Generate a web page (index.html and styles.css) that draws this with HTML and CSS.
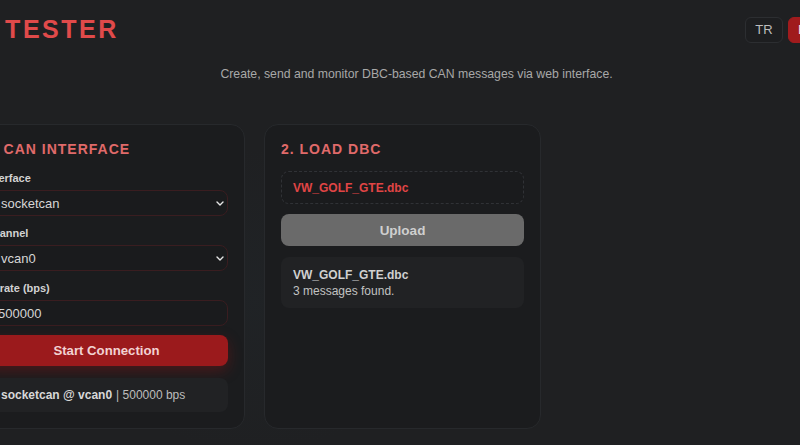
FILE: index.html
```html
<!DOCTYPE html>
<html lang="en">
<head>
<meta charset="utf-8">
<title>CAN Tester</title>
<link rel="stylesheet" href="styles.css">
</head>
<body>
<div class="viewport">
  <div class="page">
    <header class="topbar">
      <h1 class="brand">CAN TESTER</h1>
      <div class="langs">
        <button class="lang">TR</button>
        <button class="lang lang-active">EN</button>
      </div>
    </header>
    <p class="subtitle">Create, send and monitor DBC-based CAN messages via web interface.</p>
    <main class="cards">
      <section class="card">
        <h2 class="card-title">1. CAN INTERFACE</h2>
        <div class="field">
          <label class="label">Interface</label>
          <div class="control">
            <span>socketcan</span>
            <svg class="chev" width="8" height="5" viewBox="0 0 8 5"><path d="M1 1l3 3 3-3" fill="none" stroke="#e6e6e6" stroke-width="1.4" stroke-linecap="round" stroke-linejoin="round"/></svg>
          </div>
        </div>
        <div class="field">
          <label class="label">Channel</label>
          <div class="control">
            <span>vcan0</span>
            <svg class="chev" width="8" height="5" viewBox="0 0 8 5"><path d="M1 1l3 3 3-3" fill="none" stroke="#e6e6e6" stroke-width="1.4" stroke-linecap="round" stroke-linejoin="round"/></svg>
          </div>
        </div>
        <div class="field">
          <label class="label">Bitrate (bps)</label>
          <div class="control control-input"><span>500000</span></div>
        </div>
        <button class="btn-primary">Start Connection</button>
        <div class="status"><b>socketcan @ vcan0</b> | 500000 bps</div>
      </section>
      <section class="card">
        <h2 class="card-title">2. LOAD DBC</h2>
        <div class="filebox">VW_GOLF_GTE.dbc</div>
        <button class="btn-upload">Upload</button>
        <div class="info">
          <div class="info-name">VW_GOLF_GTE.dbc</div>
          <div class="info-text">3 messages found.</div>
        </div>
      </section>
    </main>
  </div>
</div>
</body>
</html>
```

FILE: styles.css
```css
* { box-sizing: border-box; }
html, body { margin: 0; padding: 0; }
body {
  width: 800px;
  height: 445px;
  overflow: hidden;
  font-family: "Liberation Sans", Arial, sans-serif;
  color: #d4d4d4;
  background-color: #1f2022;
  background-image:
    radial-gradient(ellipse 260px 220px at 255px 300px, rgba(40,60,70,0.10), rgba(0,0,0,0) 70%);
}
.viewport { width: 800px; height: 445px; overflow: hidden; }
.page {
  width: 965px;
  margin-left: -66px;
}
.topbar {
  display: flex;
  align-items: center;
  justify-content: space-between;
  padding: 15px 73px 0 0;
}
.brand {
  margin: 0;
  font-size: 25px;
  line-height: 29px;
  font-weight: 700;
  letter-spacing: 2.5px;
  color: #e04a4a;
}
.langs { display: flex; gap: 5px; }
.lang {
  height: 26px;
  width: 38px;
  padding: 0;
  border: 1px solid #2c2e31;
  border-radius: 6px;
  background: #1d1e20;
  color: #bdbdbd;
  font-family: "Liberation Sans", Arial, sans-serif;
  font-size: 13px;
}
.lang-active {
  background: #a01b1d;
  border-color: #a01b1d;
  color: #f3dede;
}
.subtitle {
  margin: 22px 0 0;
  text-align: center;
  font-size: 12.25px;
  line-height: 16px;
  color: #a8a8a8;
}
.cards {
  display: grid;
  grid-template-columns: 277px 277px;
  column-gap: 19px;
  margin-top: 42px;
  padding-left: 34px;
}
.card {
  background: #1b1c1e;
  border: 1px solid #27292c;
  border-radius: 14px;
  padding: 16px;
  display: flex;
  flex-direction: column;
}
.card-title {
  margin: 0 0 13px;
  font-size: 14px;
  line-height: 17px;
  font-weight: 700;
  letter-spacing: 1px;
  color: #e06a6a;
}
.field { display: flex; flex-direction: column; margin-bottom: 10px; }
.label {
  font-size: 11px;
  line-height: 14px;
  font-weight: 700;
  color: #d2d2d2;
  margin-bottom: 5px;
}
.control {
  height: 26px;
  display: flex;
  align-items: center;
  justify-content: space-between;
  padding: 0 3px 0 15px;
  border: 1px solid #3a1d20;
  border-radius: 8px;
  background: #1a1b1d;
  font-size: 13px;
  color: #d6d6d6;
}
.control-input { padding-left: 12px; }
.chev { display: block; }
.btn-primary {
  height: 31px;
  margin-top: -1px;
  padding-bottom: 2px;
  border: 0;
  border-radius: 8px;
  background: #9b1a1c;
  color: #f2d2d2;
  font-family: "Liberation Sans", Arial, sans-serif;
  font-size: 13.2px;
  font-weight: 700;
  box-shadow: 0 5px 14px rgba(160, 20, 20, 0.35);
}
.status {
  margin-top: 12px;
  height: 34px;
  display: flex;
  align-items: center;
  gap: 4px;
  padding-left: 16px;
  background: #212224;
  border-radius: 8px;
  font-size: 12px;
  color: #bdbdbd;
}
.status b { color: #d8d8d8; }
.filebox {
  height: 33px;
  display: flex;
  align-items: center;
  padding-left: 11px;
  border: 1px dashed #303236;
  border-radius: 8px;
  background: #1a1b1d;
  font-size: 12px;
  font-weight: 700;
  color: #e04545;
}
.btn-upload {
  margin-top: 10px;
  height: 32px;
  border: 0;
  border-radius: 8px;
  background: #6a6a6a;
  color: #cfcfcf;
  font-family: "Liberation Sans", Arial, sans-serif;
  font-size: 13.5px;
  font-weight: 700;
}
.info {
  margin-top: 11px;
  padding: 10px 12px 9px;
  background: #212224;
  border-radius: 8px;
  font-size: 12px;
  line-height: 16px;
}
.info-name { font-weight: 700; color: #d0d0d0; }
.info-text { color: #c2c2c2; }
```
